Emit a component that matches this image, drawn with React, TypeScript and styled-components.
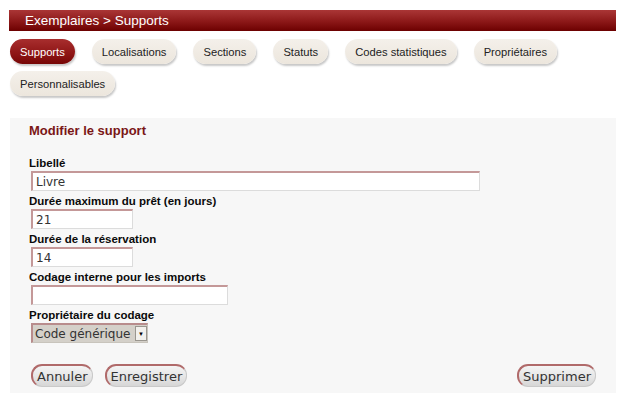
import React from 'react';
import styled, { createGlobalStyle } from 'styled-components';

const GlobalStyle = createGlobalStyle`
  html, body {
    margin: 0;
    padding: 0;
    background: #ffffff;
  }
  body {
    font-family: "Liberation Sans", Arial, sans-serif;
  }
`;

const Page = styled.div`
  padding: 10px 14px 0 10px;
`;

const TitleBar = styled.div`
  height: 21px;
  margin-left: -1px;
  padding-left: 16px;
  display: flex;
  align-items: center;
  background: linear-gradient(to bottom, #aa3636 0%, #8c1818 55%, #6c0000 100%);
  color: #ffffff;
  font-size: 13.5px;
`;

const Tabs = styled.nav`
  display: flex;
  flex-wrap: wrap;
  gap: 7px 17px;
  margin-top: 8px;
`;

const Tab = styled.button<{ $active?: boolean }>`
  height: 25px;
  padding: 0 10px;
  border: none;
  border-radius: 13px;
  font-family: "Liberation Sans", Arial, sans-serif;
  font-size: 11.2px;
  color: ${(p) => (p.$active ? '#ffffff' : '#222222')};
  background: ${(p) =>
    p.$active
      ? 'linear-gradient(to bottom, #a82e2e 0%, #8e1515 60%, #760606 100%)'
      : 'linear-gradient(to bottom, #f4f0ea 0%, #ece6dd 100%)'};
  box-shadow: 1px 2px 2px rgba(0, 0, 0, 0.22);
  cursor: pointer;
`;

const Panel = styled.form`
  margin-top: 22px;
  background: #f7f7f7;
  padding: 5px 20px 6px 19px;
  height: 275px;
  box-sizing: border-box;
  display: flex;
  flex-direction: column;
`;

const Heading = styled.h3`
  margin: 0 0 16px 0;
  font-size: 13px;
  line-height: 16px;
  font-weight: bold;
  color: #7a1616;
`;

const Field = styled.div`
  display: flex;
  flex-direction: column;
  align-items: flex-start;
  margin-bottom: 2px;
`;

const Label = styled.label`
  font-family: "Liberation Sans", Arial, sans-serif;
  font-weight: bold;
  font-size: 11.5px;
  line-height: 16px;
  color: #0a0a0a;
`;

const TextInput = styled.input<{ $w: number }>`
  width: ${(p) => p.$w}px;
  height: 20px;
  box-sizing: border-box;
  margin: 0 0 0 2px;
  padding: 0 3px;
  border-style: solid;
  border-width: 2px 1px 1px 2px;
  border-color: #c49898 #dcdcdc #dcdcdc #c49898;
  background: #ffffff;
  font-family: "DejaVu Sans", Verdana, sans-serif;
  font-size: 12px;
  color: #333333;
  outline: none;
`;

const SelectBox = styled.div`
  width: 117px;
  height: 20px;
  box-sizing: border-box;
  margin-left: 2px;
  display: flex;
  align-items: center;
  border-style: solid;
  border-width: 2px 1px 1px 2px;
  border-color: #b88c8c #c8c4bc #c8c4bc #b88c8c;
  background: #d4d0c9;
`;

const SelectValue = styled.span`
  flex: 1;
  padding-left: 2px;
  font-family: "DejaVu Sans", Verdana, sans-serif;
  font-size: 12px;
  color: #333333;
  white-space: nowrap;
  overflow: hidden;
`;

const SelectArrow = styled.span`
  width: 12px;
  height: 15px;
  flex: none;
  display: flex;
  align-items: center;
  justify-content: center;
  background: #f2f0ec;
  border: 1px solid #9a968f;
  box-sizing: border-box;
  font-size: 6px;
  color: #000000;
`;

const Actions = styled.div`
  margin-top: auto;
  display: flex;
  gap: 12px;
  padding-left: 2px;
`;

const Spacer = styled.div`
  flex: 1;
`;

const ActionButton = styled.button`
  height: 23px;
  padding: 0 4px;
  border-style: solid;
  border-width: 2px 1px 1px 2px;
  border-color: #b06a6a #c9c9c9 #c9c9c9 #b06a6a;
  border-radius: 11px;
  background: linear-gradient(to bottom, #f4f4f4 0%, #e4e4e4 60%, #d6d6d6 100%);
  font-family: "DejaVu Sans", Verdana, sans-serif;
  font-size: 13px;
  color: #333333;
  cursor: pointer;
`;

const tabs = [
  'Supports',
  'Localisations',
  'Sections',
  'Statuts',
  'Codes statistiques',
  'Propriétaires',
  'Personnalisables',
];

const App: React.FC = () => {
  return (
    <Page>
      <GlobalStyle />
      <TitleBar>Exemplaires &gt; Supports</TitleBar>

      <Tabs>
        {tabs.map((t) => (
          <Tab key={t} type="button" $active={t === 'Supports'}>
            {t}
          </Tab>
        ))}
      </Tabs>

      <Panel onSubmit={(e) => e.preventDefault()}>
        <Heading>Modifier le support</Heading>

        <Field>
          <Label>Libellé</Label>
          <TextInput $w={449} defaultValue="Livre" />
        </Field>
        <Field>
          <Label>Durée maximum du prêt (en jours)</Label>
          <TextInput $w={102} defaultValue="21" />
        </Field>
        <Field>
          <Label>Durée de la réservation</Label>
          <TextInput $w={102} defaultValue="14" />
        </Field>
        <Field>
          <Label>Codage interne pour les imports</Label>
          <TextInput $w={197} defaultValue="" />
        </Field>
        <Field>
          <Label>Propriétaire du codage</Label>
          <SelectBox>
            <SelectValue>Code générique</SelectValue>
            <SelectArrow>▼</SelectArrow>
          </SelectBox>
        </Field>

        <Actions>
          <ActionButton type="button">Annuler</ActionButton>
          <ActionButton type="submit">Enregistrer</ActionButton>
          <Spacer />
          <ActionButton type="button">Supprimer</ActionButton>
        </Actions>
      </Panel>
    </Page>
  );
};

export default App;
